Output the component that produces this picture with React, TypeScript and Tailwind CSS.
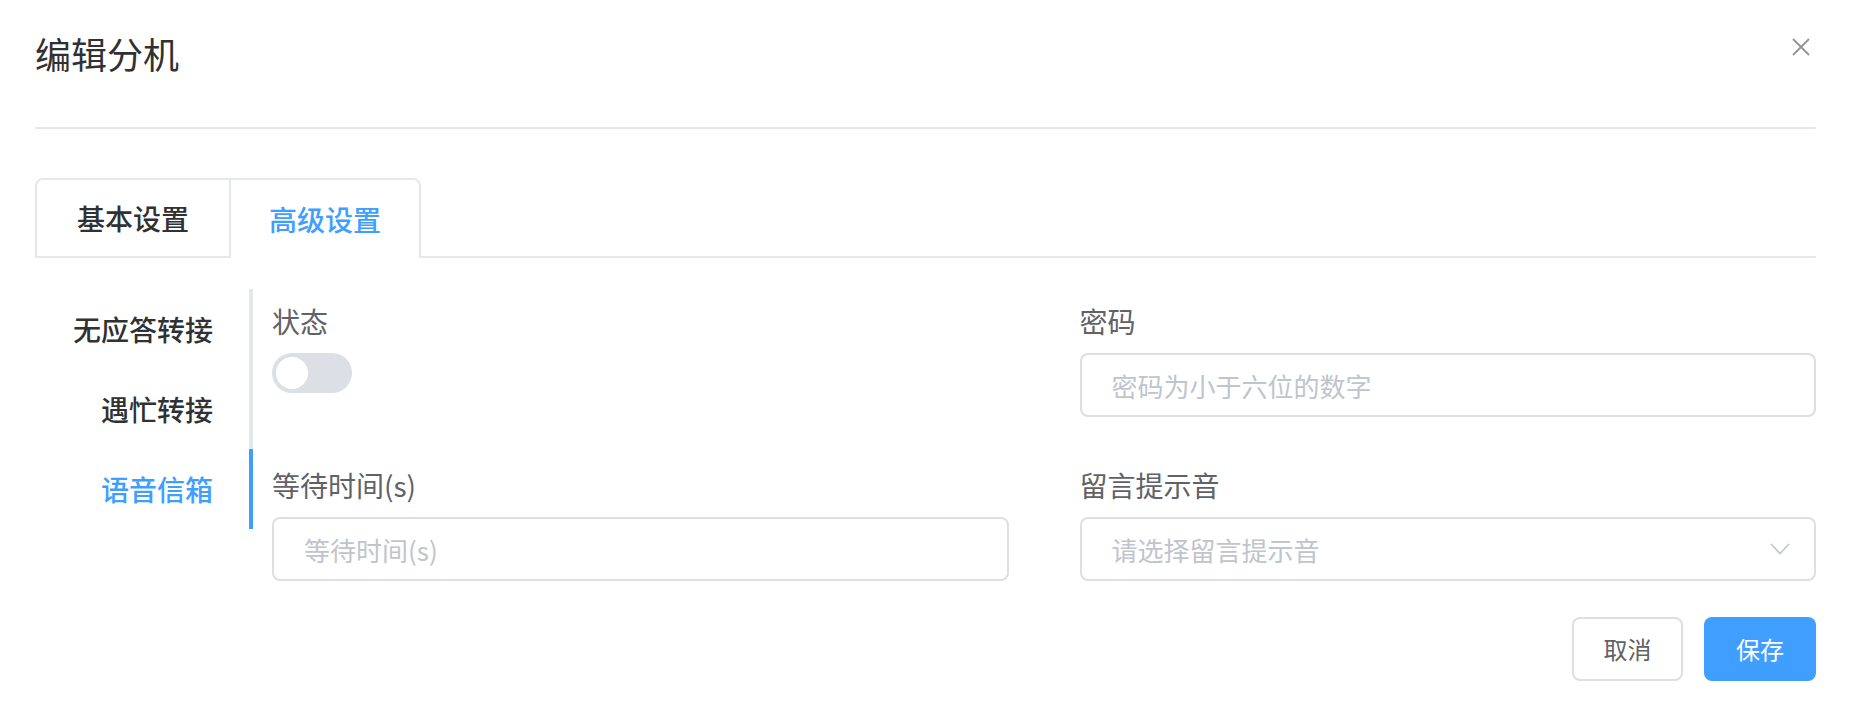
import React from "react";

const font = { fontFamily: '"Noto Sans CJK SC", "Noto Sans", sans-serif' };

function Field({ label, children }: { label: string; children: React.ReactNode }) {
  return (
    <div className="flex flex-col">
      <div className="h-[64px] flex items-center text-[28px] text-[#606266]">{label}</div>
      {children}
    </div>
  );
}

function Input({ placeholder, arrow }: { placeholder: string; arrow?: boolean }) {
  return (
    <div className="h-[64px] border-2 border-[#dcdfe6] rounded-[8px] pl-[30px] pr-[24px] flex items-center justify-between bg-white">
      <span className="text-[26px] text-[#c0c4cc]">{placeholder}</span>
      {arrow && (
        <svg width="20" height="12" viewBox="0 0 20 12" fill="none">
          <polyline points="1,1 10,10.5 19,1" stroke="#c0c4cc" strokeWidth="1.6" />
        </svg>
      )}
    </div>
  );
}

export default function App() {
  return (
    <div className="w-[1850px] h-[722px] bg-white pl-[35px] pr-[34px] flex flex-col" style={font}>
      {/* header */}
      <div className="h-[127px] flex justify-between items-start">
        <div className="pt-[35px] text-[36px] leading-[36px] text-[#303133]">编辑分机</div>
        <svg className="mt-[38px] mr-[6px]" width="18" height="18" viewBox="0 0 18 18" fill="none">
          <line x1="1" y1="1" x2="17" y2="17" stroke="#909399" strokeWidth="1.8" />
          <line x1="17" y1="1" x2="1" y2="17" stroke="#909399" strokeWidth="1.8" />
        </svg>
      </div>
      <div className="h-[2px] bg-[#e4e7ed]" />

      {/* card tabs */}
      <div className="mt-[49px] flex h-[80px]">
        <div className="flex border-t-2 border-l-2 border-r-2 border-[#e4e7ed] rounded-t-[8px]">
          <div className="w-[192px] border-b-2 border-[#e4e7ed] flex items-center justify-center text-[28px] font-medium text-[#303133]">
            基本设置
          </div>
          <div className="w-[190px] border-l-2 border-[#e4e7ed] flex items-center justify-center text-[28px] font-medium text-[#409eff]">
            高级设置
          </div>
        </div>
        <div className="flex-1 border-b-2 border-[#e4e7ed]" />
      </div>

      {/* body */}
      <div className="mt-[31px] flex">
        <div className="w-[218px] flex flex-col">
          <div className="h-[80px] border-r-4 border-[#e4e7ed] flex items-center justify-end pr-[36px] text-[28px] font-medium text-[#303133]">
            无应答转接
          </div>
          <div className="h-[80px] border-r-4 border-[#e4e7ed] flex items-center justify-end pr-[36px] text-[28px] font-medium text-[#303133]">
            遇忙转接
          </div>
          <div className="h-[80px] border-r-4 border-[#409eff] flex items-center justify-end pr-[36px] text-[28px] font-medium text-[#409eff]">
            语音信箱
          </div>
        </div>

        <div className="ml-[19px] flex-1 flex flex-col">
          <div className="grid grid-cols-2 gap-x-[71px] gap-y-[36px]">
            <Field label="状态">
              <div className="w-[80px] h-[40px] rounded-full bg-[#dcdfe6] p-[4px] flex items-center">
                <div className="w-[32px] h-[32px] rounded-full bg-white" />
              </div>
            </Field>
            <Field label="密码">
              <Input placeholder="密码为小于六位的数字" />
            </Field>
            <Field label="等待时间(s)">
              <Input placeholder="等待时间(s)" />
            </Field>
            <Field label="留言提示音">
              <Input placeholder="请选择留言提示音" arrow />
            </Field>
          </div>
          <div className="mt-[36px] flex justify-end gap-[21px]">
            <button className="w-[111px] h-[64px] border-2 border-[#dcdfe6] rounded-[8px] bg-white text-[24px] text-[#606266]">
              取消
            </button>
            <button className="w-[112px] h-[64px] rounded-[8px] bg-[#409eff] text-[24px] text-white">
              保存
            </button>
          </div>
        </div>
      </div>
    </div>
  );
}
